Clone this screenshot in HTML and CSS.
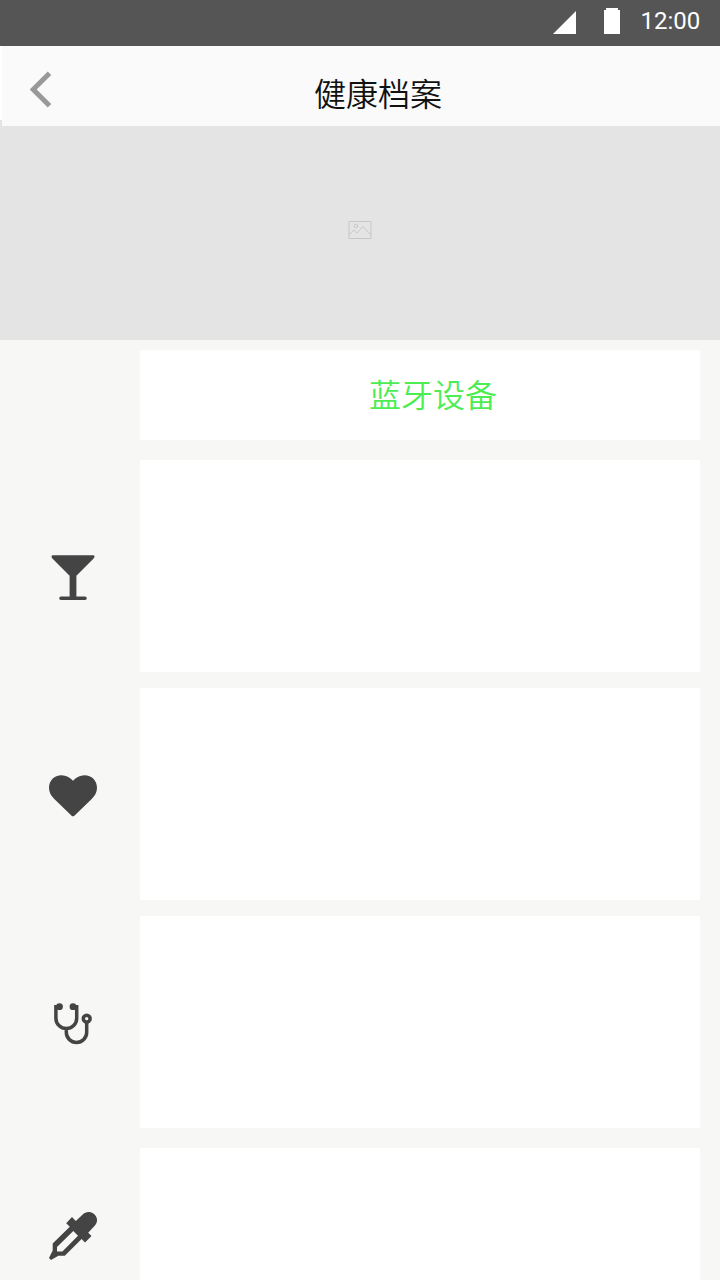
FILE: index.html
```
<!DOCTYPE html>
<html lang="zh-CN">
<head>
<meta charset="utf-8">
<title>健康档案</title>
<link rel="stylesheet" href="styles.css">
</head>
<body>
<div class="screen">
  <div class="status-bar">
    <svg class="signal" width="23" height="23" viewBox="0 0 23 23"><path d="M0 23L23 0V23Z"/></svg>
    <svg class="battery" width="16" height="26" viewBox="0 0 16 26"><path d="M0 2H2V0H14V2H16V26H0Z"/></svg>
    <span class="time">12:00</span>
  </div>
  <header class="header">
    <svg class="back" width="24" height="38" viewBox="0 0 24 38"><path d="M20.5 2.2L4.2 18.5L20.5 34.8"/></svg>
    <h1 class="title">健康档案</h1>
  </header>
  <div class="banner">
    <svg class="placeholder" width="24" height="18" viewBox="0 0 24 18"><path d="M1 .5H23V17.5H1ZM1 13.5L6 9L9 12L15 5.5L23 14"/><circle cx="8" cy="5" r="1.8"/></svg>
  </div>
  <main class="list">
    <section class="card device">蓝牙设备</section>
    <div class="row">
      <svg class="icon glass" width="48" height="48" viewBox="0 0 48 48"><path d="M4 1.2H44Q45.5 1.2 45.5 2.6Q45.5 3.5 44.6 4.4L27.4 21.7V42.6H36Q37.8 42.6 37.8 44.3Q37.8 46 36 46H12Q10.2 46 10.2 44.3Q10.2 42.6 12 42.6H20.6V21.7L3.4 4.4Q2.5 3.5 2.5 2.6Q2.5 1.2 4 1.2Z"/></svg>
      <section class="card"></section>
    </div>
    <div class="row">
      <svg class="icon heart" width="48" height="48" viewBox="0 0 48 48"><path d="M24 8.7C21 5.3 17 3.2 12.5 3.2C5.3 3.2 0 8.5 0 15.7C0 20.5 2.1 23.8 5.3 27L22.9 43.9Q24 44.7 25.1 43.9L42.7 27C45.9 23.8 48 20.5 48 15.7C48 8.5 42.7 3.2 35.5 3.2C31 3.2 27 5.3 24 8.7Z"/></svg>
      <section class="card"></section>
    </div>
    <div class="row last-full">
      <svg class="icon stethoscope" width="48" height="48" viewBox="0 0 48 48"><path class="tube" d="M10.7 6.7H6.9V18.2A10.4 10.4 0 0 0 27.7 18.2V6.7H24M17.3 29V32.3A10.2 10.2 0 0 0 37.7 32.3V22"/><circle cx="10.5" cy="6.7" r="3.4"/><circle cx="24" cy="6.7" r="3.4"/><circle class="tube" cx="37.7" cy="18.7" r="3.4"/></svg>
      <section class="card"></section>
    </div>
    <div class="row">
      <svg class="icon dropper" width="48" height="48" viewBox="0 0 48 48"><path fill-rule="evenodd" d="M23 5L26.8 8.9L34 2.3C37.3-.8 42.4-.8 45.6 2.4C48.8 5.6 48.8 10.5 45.7 13.8L39.2 20.8L42.5 24L36 30.5L32.6 27L15.8 43.8H9.4L2 48L0 46L3.7 38.6V31.6L20.8 14.8L17.2 11.3ZM24.3 19L8 35V39.5H13.4L29 23.7Z"/></svg>
      <section class="card"></section>
    </div>
  </main>
</div>
</body>
</html>
```
FILE: styles.css
```
* {
  box-sizing: border-box;
}

body {
  margin: 0;
  font-family: Roboto, "Noto Sans CJK SC", sans-serif;
  background: #fff;
}

svg {
  display: block;
  flex: none;
}

.screen {
  width: 720px;
  height: 1280px;
  overflow: hidden;
}

.status-bar {
  display: flex;
  height: 46px;
  padding: 8px 19px 0 553px;
  background: #555;
  color: #fff;
  fill: #fff;
}

.signal {
  margin-top: 3px;
}

.battery {
  margin-left: 28px;
}

.time {
  margin-left: 20.5px;
  font-size: 24px;
  line-height: 26px;
}

.header {
  position: relative;
  display: flex;
  height: 80px;
  margin-left: 2px;
  padding-left: 27px;
  background: #fafafa;
}

.back {
  margin-top: 25px;
  fill: none;
  stroke: #999;
  stroke-width: 5;
}

.title {
  margin: 25px 0 0 261px;
  color: #111;
  font-size: 32px;
  font-weight: 350;
  line-height: 48px;
}

.banner {
  display: flex;
  justify-content: center;
  height: 220px;
  margin-top: -6px;
  padding-top: 101px;
  background: #e4e4e4;
}

.placeholder {
  fill: none;
  stroke: #c6c7cb;
}

.list {
  height: 940px;
  padding: 10px 20px 0 0;
  background: #f7f7f5;
}

.card {
  flex: 1;
  background: #fff;
}

.device {
  height: 90px;
  margin: 0 0 20px 140px;
  padding: 22px 0 0 229px;
  color: #4bed52;
  font-size: 32px;
  font-weight: 350;
  line-height: 48px;
}

.row {
  display: flex;
  height: 212px;
  margin-bottom: 16px;
}

.last-full {
  margin-bottom: 20px;
}

.icon {
  margin: 84px 43px 0 49px;
  fill: #444;
}

.glass {
  margin-top: 94px;
}

.dropper {
  margin-top: 64px;
}

.tube {
  fill: none;
  stroke: #444;
  stroke-width: 3.5;
}
```
